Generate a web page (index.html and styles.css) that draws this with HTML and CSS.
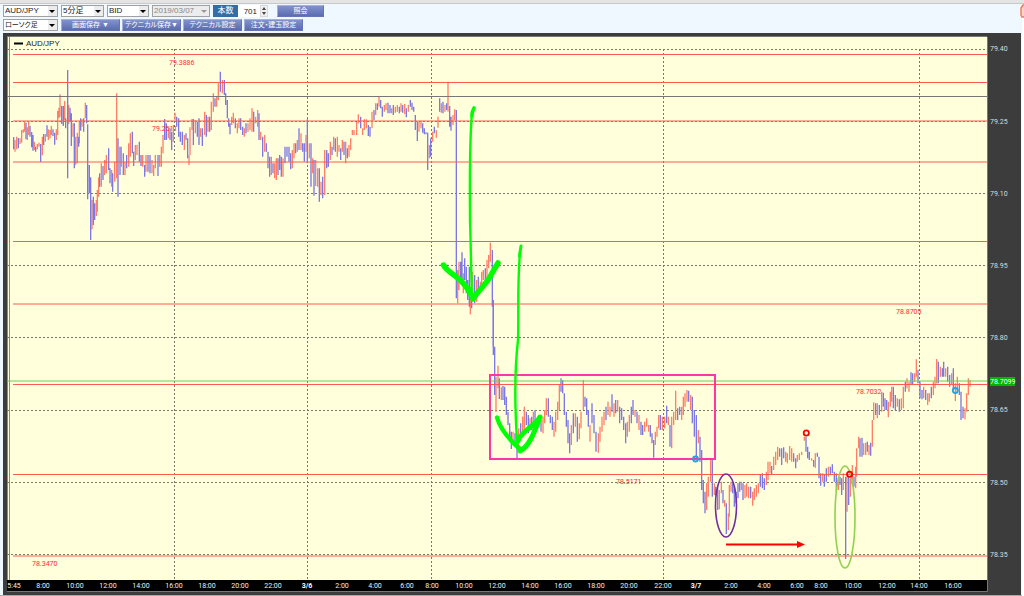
FILE: index.html
```html
<!DOCTYPE html>
<html lang="ja">
<head>
  <meta charset="utf-8">
  <title>AUD/JPY チャート</title>
  <link rel="stylesheet" href="styles.css">
</head>
<body>
<div class="strip"></div>
<main class="workspace">
  <form class="toolbar" id="chartForm">
    <div class="row">
      <span class="drop pair"><select aria-label="通貨ペア"><option>AUD/JPY</option></select></span>
      <span class="drop span"><select aria-label="足種"><option>5分足</option></select></span>
      <span class="drop side"><select aria-label="BID/ASK"><option>BID</option></select></span>
      <span class="drop date off"><select aria-label="日付" disabled><option>2019/03/07</option></select></span>
      <span class="count">
        <label for="bars">本数</label>
        <input type="text" id="bars" value="701">
        <svg class="spin" viewBox="0 0 8 12" aria-hidden="true">
          <rect x="0.5" y="0.5" width="7" height="11" fill="#f0f0f0" stroke="#d8d8d8"/>
          <path d="M4 2 L6 5 H2 Z M4 10 L6 7 H2 Z" fill="#444"/>
        </svg>
      </span>
      <button type="submit" class="show">照会</button>
    </div>
    <div class="row second">
      <span class="drop pair"><select aria-label="チャート種類"><option>ローソク足</option></select></span>
      <button type="button">画面保存 ▼</button>
      <button type="button">テクニカル保存▼</button>
      <button type="button">テクニカル設定</button>
      <button type="button">注文・建玉設定</button>
    </div>
  </form>

  <svg class="chart" viewBox="3 33 1018 562">
    <rect class="frame" x="3" y="33" width="1018" height="562"/>
    <rect class="plot" x="7" y="37" width="980" height="543"/>
    <rect class="time-axis" x="7" y="580" width="980" height="11"/>
    <path class="frame-line" d="M7 36.5 H987 M7 591.5 H987.5 V37"/>
    <path class="edge" d="M7.5 37 V580 M9.5 37 V580"/>
    <path class="grid" d="M7 49.5 H987 M7 121.5 H987 M7 193.5 H987 M7 265.5 H987 M7 337.5 H987 M7 410.5 H987 M7 482.5 H987 M7 554.5 H987"/>
    <path class="grid" d="M174.5 49 V580 M307.5 49 V580 M431.5 49 V580 M663.5 49 V580 M919.5 49 V580"/>
    <g id="candles"></g>
    <path class="level" d="M13 54.5 H987 M13 82.5 H987 M13 121 H987 M13 162 H987 M13 241.5 H987 M13 304 H987 M13 384.5 H987 M13 474.5 H987 M13 556 H987"/>
    <path class="cursor" d="M7 96.5 H987"/>
    <path class="bid" d="M7 381 H987"/>

    <path d="M14 43.5 H23" stroke="#000" stroke-width="2"/>
    <text class="legend" x="26" y="46">AUD/JPY</text>

    <g class="level-text">
      <text x="169" y="65">79.3886</text>
      <text x="152" y="131">79.2511</text>
      <text x="896" y="314">78.8705</text>
      <text x="856" y="394">78.7032</text>
      <text x="616" y="484">78.5171</text>
      <text x="32" y="566">78.3470</text>
    </g>

    <g class="price" id="prices"></g>
    <rect x="990" y="377" width="25" height="9" fill="#00b400"/>
    <text class="last" x="990" y="384">78.7099</text>
    <svg x="7" y="580" width="980" height="11" viewBox="7 580 980 11"><g class="time" id="times"></g></svg>

    <!-- notes drawn over the chart -->
    <rect class="box" x="490" y="375" width="225" height="84"/>
    <ellipse cx="726" cy="505.5" rx="10.5" ry="31.5" class="ring purple"/>
    <ellipse cx="845" cy="517" rx="10" ry="51" class="ring lime"/>
    <path d="M726 544.5 H799" stroke="#f00" stroke-width="2"/>
    <path d="M797 541 L805 544.5 L797 548 Z" fill="#f00"/>
    <g class="pen">
      <path stroke-width="3.6" d="M474 108 Q472 111 472 116"/>
      <path stroke-width="2.4" d="M472 112 C469 150 470 190 470 220 C471 250 471 270 472 298"/>
      <path stroke-width="5.5" d="M443.5 265 C447 272 457 276 462 282 C467 287 470 292 473 299 C478 291 485 285 490 277 C493 271 495 268 498 263"/>
      <path stroke-width="3" d="M521 246 L519.5 256"/>
      <path stroke-width="2.4" d="M520 252 C517 290 519 315 518 340 C514 375 515 410 517 440"/>
      <path stroke-width="4.4" d="M497 417.5 C500 428 506 437 520 449"/>
      <path stroke-width="5" d="M520 451 C530 446 535 430 540 417 C534 427 520 432 518 441"/>
    </g>
    <g class="mark">
      <circle cx="695.5" cy="459" r="2.5" stroke="#1ea5e6"/>
      <circle cx="955.3" cy="390.5" r="2.5" stroke="#1ea5e6"/>
      <circle cx="806.3" cy="433" r="2.6" stroke="#f00"/>
      <circle cx="849.6" cy="474.3" r="2.6" stroke="#f00"/>
    </g>
  </svg>
</main>
<svg class="tab" viewBox="0 0 4 14" aria-hidden="true">
  <path d="M5 1 H3 L1 4 V11 L2 13 H5" fill="#fbd3c4" stroke="#ee7a5c" stroke-width="1.4"/>
</svg>
<script src="chart.js"></script>
</body>
</html>
```
FILE: styles.css
```css
body {
  margin: 0;
  background-color: #fff;
  font-family: "Liberation Sans", "Noto Sans CJK JP", sans-serif;
  font-size: 8px;
}

.strip {
  height: 3px;
  background-color: #e4e4e4;
  border-bottom: 1px solid #c8c8c8;
}

.workspace {
  margin-right: 2px;
  padding: 1px 1px 0 3px;
  background-color: #eff7ff;
  border-bottom: 1px solid #aaa;
}

.toolbar {
  display: flex;
  flex-direction: column;
  gap: 2px;
  padding-bottom: 2px;
}

.row {
  display: flex;
  gap: 3px;
  height: 12px;
}

.second {
  gap: 2px;
}

/* ドロップダウン */
.drop {
  position: relative;
  display: block;
  box-sizing: border-box;
  border: 1px solid #a0a0a0;
  background-color: #fff;
}

.drop select {
  display: block;
  width: 100%;
  height: 10px;
  padding: 0 10px 0 1px;
  border: 0;
  appearance: none;
  background: none;
  color: #222;
  font: inherit;
  line-height: 10px;
  font-feature-settings: "palt";
}

.drop::before {
  content: "";
  position: absolute;
  top: 0;
  right: 0;
  width: 9px;
  height: 10px;
  background-color: #ececec;
}

.drop::after {
  content: "";
  position: absolute;
  top: 4px;
  right: 2px;
  border: 3px solid transparent;
  border-top-color: #000;
  border-bottom: 0;
}

.pair {
  width: 55px;
}

.span {
  width: 43px;
}

.side {
  width: 42px;
}

.date {
  width: 58px;
}

.off {
  background-color: #ececec;
}

.off select {
  color: #888;
  opacity: 1;
}

.off::after {
  border-top-color: #999;
}

.second .drop {
  margin-right: 1px;
}

.second select {
  font-size: 7px;
}

/* 本数 */
.count {
  display: flex;
  width: 55px;
}

.count label {
  width: 25px;
  background-color: #336da5;
  color: #fff;
  line-height: 12px;
  text-align: center;
}

.count input {
  box-sizing: border-box;
  width: 22px;
  padding: 0 3px;
  border: 0;
  background-color: #fff;
  color: #222;
  font: inherit;
  text-align: right;
}

.spin {
  width: 8px;
  height: 12px;
}

button {
  width: 59px;
  height: 12px;
  padding: 0;
  border: 1px solid #6474b4;
  border-top-color: #a4b0da;
  border-left-color: #a4b0da;
  background-image: linear-gradient(#8292cc, #5a6cb0);
  color: #fff;
  font-family: inherit;
  font-size: 7px;
  line-height: 10px;
  font-feature-settings: "palt";
  white-space: nowrap;
}

.show {
  width: 47px;
  margin-left: 6px;
}

/* チャート */
.chart {
  display: block;
  width: 100%;
  height: auto;
}

.chart path {
  fill: none;
}

.chart path[fill] {
  fill: #f00;
}

.frame {
  fill: #3c3c3c;
}

.plot {
  fill: #ffffdc;
}

.time-axis {
  fill: #000;
}

.frame-line {
  stroke: #777;
}

.edge {
  stroke: #8a8a80;
}

.grid {
  stroke: #77776a;
  stroke-dasharray: 2 2;
}

.level {
  stroke: #ff5a50;
}

.cursor {
  stroke: #777;
}

.bid {
  stroke: #6ccc5c;
}

.up {
  stroke: #ff8068;
}

.down {
  stroke: #7c78e4;
}

.chart text {
  font-family: Roboto, "Liberation Sans", sans-serif;
  font-size: 7px;
}

.chart .legend {
  font-family: "Liberation Sans", sans-serif;
  font-size: 8px;
  fill: #222;
}

.level-text {
  fill: #ff2c38;
}

.price {
  fill: #dcdcdc;
}

.last {
  fill: #fff;
}

.time {
  fill: #f0f0f0;
  text-anchor: middle;
}

.time .day {
  font-weight: bold;
  fill: #fff;
}

.box {
  fill: none;
  stroke: #ff37a2;
  stroke-width: 2;
}

.ring {
  fill: none;
  stroke-width: 1.6;
}

.purple {
  stroke: #7030a0;
}

.lime {
  stroke: #92d050;
}

.pen {
  stroke: #0f0;
  stroke-linecap: round;
  stroke-linejoin: round;
}

.mark {
  fill: none;
  stroke-width: 1.8;
}

.tab {
  position: absolute;
  top: 4px;
  right: 0;
  width: 4px;
  height: 14px;
  overflow: hidden;
}
```
FILE: chart.js
```js
const SVG = 'http://www.w3.org/2000/svg';

// each block: origin, then "x high low" per bar in 1/3 units, r = up, b = down
const blocks = [
  { x: 0, y: 40, bars: `b41 291 328,r45 300 335,r50 290 328,b55 294 325,r60 295 312,r65 270 308,r70 268 278,r74 243 275,
b78 248 298,r82 262 300,r86 243 285,b90 258 290,b95 276 322,b99 285 332,r103 305 330,b107 320 335,r112 312 328,r117 308 320,
b122 312 366,r127 290 346,b131 282 315,r136 282 305,b141 256 290,r145 268 300,r150 270 295,r154 258 285,b159 268 288,
b164 278 314,r169 268 300,r173 212 285,r177 203 235,r180 163 230,b185 198 252,b190 198 258,r194 183 240,b197 235 265,
b203 90 415,r206 195 252,b210 203 245,b214 220 318,r219 250 290,b223 250 385,r227 290 374,r232 278 370,b236 290 320,
r238 245 310,b242 235 272,r246 238 260,b251 235 275,r256 188 235,b260 195 250,b263 253 478,b268 375 460,b272 412 600,
r276 480 568,b280 470 555,b284 490 540,r289 480 528,r292 450 515,r296 412 470,b299 400 440,r304 370 440,b309 378 420,
r314 360 405,r319 345 400,b326 325 390,b330 385 430,r335 390 440,b338 400 455,r344 365 425,r350 160 415,b354 295 470,
b360 320 405,r364 320 380,b370 340 405,r375 365 405,b380 345 385,r386 310 380,r391 280 350,b397 275 340,b401 335 378,
r406 315 360,r411 315 345,b418 305 365,b423 345 378,r428 345 380,b434 375 410,r438 345 395,b444 345 395,b450 345 400,
r456 360 400,r461 375 408,r466 345 385,b474 345 408,r479 345 380,r484 320 380,r489 285 340,b494 237 300,b499 250 300,
r505 265 295,b510 265 300,b515 275 330,r520 255 305,r525 218 240,b530 230 260,b536 235 290,b541 275 305,b547 275 315,
r553 285 330,b558 280 300,b563 295 355,r567 345 375,r570 262 345,r576 237 270,b580 237 315,r586 240 280,b592 245 290,
b597 235 315,r602 265 290,b607 265 318,r614 215 285,b619 225 290,r624 230 275,b629 230 275,r634 185 270,r640 160 215,
b645 175 200,r650 170 200,r655 130 180,b661 95 155,r667 120 160,b673 120 165,b677 160 195,b682 180 235,b686 235 260,
b690 250 283,r695 230 255,r700 218 250,b706 235 265,r712 250 280,r717 235 265` },
  { x: 240, y: 80, bars: `b2 115 150,b8 140 165,r13 145 170,b18 130 160,r24 130 155,r30 115 150,r36 85 155,b41 95 155,
r47 110 130,r53 90 140,b57 100 180,r62 155 180,b68 170 230,r74 165 215,b79 190 215,b84 215 265,b89 230 290,r94 230 285,
b99 250 280,r104 250 295,r109 235 300,b114 235 285,b119 225 270,b124 230 290,r129 235 290,b135 200 250,b141 200 230,
b147 200 245,b152 220 268,r157 210 265,r162 190 235,b167 190 220,r172 180 215,b177 145 210,r183 160 210,b188 190 215,
b193 190 245,r198 165 215,b202 118 250,r208 190 235,b213 190 320,r218 235 280,b222 240 347,r227 240 318,r233 265 320,
b238 265 365,r243 305 345,b248 290 355,r254 210 345,b260 210 265,b265 220 260,r271 185 240,b276 200 225,r281 170 210,
b286 175 215,r292 170 230,r297 195 215,b302 205 240,r307 180 215,b312 185 225,r317 185 250,b322 205 235,r327 195 230,
r332 175 210,r337 150 165,r342 150 165,r350 125 165,r355 103 130,b362 110 145,r368 145 165,r373 118 150,r379 118 145,
b385 135 168,b390 140 170,r396 95 145,b402 90 120,r407 70 105,b412 70 90,r417 50 80,b422 60 85,b427 80 110,r433 75 95,
r438 70 90,b444 68 100,b450 75 100,r455 85 100,b460 75 105,r466 80 98,r472 75 95,b478 80 100,r483 70 95,b488 75 98,
r494 72 102,b499 85 112,r505 75 95,b511 60 80,b516 68 90,b521 80 95,b526 105 150,b532 125 183,r537 125 155,r543 122 145,
b548 130 158,b553 145 163,b558 157 163,b563 158 270,r568 195 235,b572 175 230,r578 155 185,b583 140 160,r589 150 173,
r594 110 143,b599 55 95,r604 70 98,b609 65 100,r615 75 95,b620 70 90,r624 5 95,b629 78 140,b633 110 152,r639 105 135,
r644 88 120` },
  { x: 420, y: 80, bars: `b109 90 655,r113 570 670,r117 545 630,b122 545 600,b126 517 605,r130 580 640,b134 535 600,
b139 560 640,b143 600 660,b148 560 680,r151 620 703,b155 640 685,r158 575 620,b164 585 670,r170 600 665,b175 590 640,
r181 605 640,r185 575 620,r190 570 600,b196 565 600,r201 540 600,r206 525 565,r211 488 545,b217 510 680,b220 670 800` },
  { x: 470, y: 300, bars: `b70 0 165,b74 140 285,r78 230 335,r84 197 265,b88 235 297,r94 262 300,b99 258 300,b104 260 315,
b109 290 345,b114 335 375,b119 370 420,b124 395 447,r129 395 425,b135 400 440,b141 420 475,r146 385 445,b152 370 400,
r158 350 400,r163 320 390,b169 335 375,b175 345 400,r180 355 385,b185 350 390,r190 335 375,b195 330 390,b201 355 385,
r207 345 380,b213 360 395,r219 350 400,r224 330 370,r229 295 345,b235 295 350,b241 345 370,b247 350 390,r252 365 410,
r257 335 395,r263 305 360,r268 255 330,b273 235 275,b278 240 280,b283 280 345,b289 335 380,b294 360 430,b299 400 460,
r304 375 435,b310 340 400,r316 340 380,b322 350 425,r328 370 418,r333 335 385,r340 240 330,b345 290 320,b350 295 345,
b355 330 380,r360 375 425,b366 310 370,b372 345 400,b378 395 455,r385 400 458,r390 380 425,r396 350 395,r402 335 375,
b408 320 360,r414 305 345,r420 320 350,b426 283 335,r432 310 350,b437 300 340,r443 300 335,b449 320 370,b455 325 360,
b461 350 390,b467 370 430,r472 365 410,r478 345 395,b484 320 370,b489 300 345,r495 330 350,b501 335 370,r507 345 390,
b513 365 405,b518 375 405,r524 365 395,r530 355 380,r536 375 395,b541 375 410,b546 400 430,b551 420 473,r556 395 435,
r561 380 410,r566 345 385,b571 345 390,r577 350 390,r584 350 385,b590 317 370,r595 350 375,b600 375 440,r605 350 445,
r611 335 375,r617 272 360,b623 325 360,b629 320 345,r635 320 360,r640 290 345,r645 280 320,r651 270 305,b656 272 305,
r662 285 330,b667 290 370,b673 330 410,b679 345 475,r685 390 430,b690 410 485,b695 450 570,b700 540 610,b705 575 640,
r710 550 630,r715 530 590,r722 480 545,b727 480 590` },
  { x: 700, y: 340, bars: `r43 430 465,b47 440 470,b53 440 510,r58 450 508,r64 425 460,b69 450 490,r74 480 500,b79 490 582,
r85 520 570,r88 435 530,r93 425 455,b98 430 460,b103 440 500,b108 455 490,b114 430 475,b119 425 455,r124 425 450,
b129 430 480,r135 435 475,r140 430 470,r146 440 475,b152 440 475,r158 455 497,r163 445 480,r169 435 470,r175 430 460,
b181 405 440,b187 400 445,b193 415 450,r199 395 435,r204 365 420,r210 365 400,b215 378 405,r221 350 390,r227 335 375,
r233 320 360,b239 325 350,b245 325 375,b251 322 355,r257 335 365,r262 340 370,r269 318 360,r275 325 365,b281 340 365,
b287 355 385,r292 345 365,r298 340 360,r305 335 345,r313 290 302,b318 290 335,b323 320 355,b328 335 360,r335 355 362,
b341 360 380,r346 340 383,b352 338 350,b357 350 415,b362 400 437,r368 400 425,b373 405 440,b379 385 425,r385 380 410,
b391 380 405,b397 373 400,b403 395 425,b409 400 455,r415 415 450,b420 410 435,b425 415 465,r430 400 450,b437 410 657,
r441 410 515,b446 410 495,r451 415 470,r457 375 435,b462 410 440,r467 380 445,r470 325 410,r476 290 325,b480 295 350,
b486 293 350,r491 310 345,r497 308 345,b502 305 335,r507 315 345,b512 308 347,r517 240 320,r521 187 240,b527 190 225,
r532 190 235,b538 195 225,r545 155 215,b550 158 200,b555 175 210,b560 180 210,r565 185 232,r571 155 200,r575 140 185,
b580 140 205,b586 165 210,r592 175 200,b598 178 215,r604 175 210,r610 140 205,b616 125 155,r621 115 145,r627 125 155,
b633 97 135,b638 100 135,r644 100 125,r649 58 110,b654 90 130,b660 125 175,b666 150 178,r671 140 175,b677 150 180,
r683 160 195,r688 160 185,b694 140 175,r700 125 165,r705 110 145,r710 57 130,b715 65 130,r721 80 110,b727 85 110,
b731 65 110,r737 85 110,b743 80 125,b749 105 140,r755 100 135,b760 85 150,r766 130 183,r772 110 160,b778 130 165,
b783 155 240,b789 200 235,r795 205 238,r800 160 215,r805 115 165,r810 120 140` }
];

const times = [
  [14, '5:45'], [43, '8:00'], [75, '10:00'], [108, '12:00'], [141, '14:00'], [174, '16:00'], [207, '18:00'],
  [240, '20:00'], [273, '22:00'], [307, '3/6'], [342, '2:00'], [375, '4:00'], [407, '6:00'], [432, '8:00'],
  [464, '10:00'], [497, '12:00'], [530, '14:00'], [563, '16:00'], [596, '18:00'], [629, '20:00'], [663, '22:00'],
  [696, '3/7'], [731, '2:00'], [764, '4:00'], [797, '6:00'], [821, '8:00'], [853, '10:00'], [887, '12:00'],
  [919, '14:00'], [953, '16:00']
];

const prices = [
  [51, '79.40'], [124, '79.25'], [196, '79.10'], [268, '78.95'],
  [340, '78.80'], [412, '78.65'], [485, '78.50'], [557, '78.35']
];

function addText(parent, x, y, text, cls) {
  const el = document.createElementNS(SVG, 'text');
  el.setAttribute('x', x);
  el.setAttribute('y', y);
  if (cls) el.setAttribute('class', cls);
  el.textContent = text;
  parent.appendChild(el);
}

const candles = document.getElementById('candles');
blocks.forEach(block => {
  const d = { r: '', b: '' };
  block.bars.split(',').forEach(item => {
    const bar = item.trim();
    const [x, high, low] = bar.slice(1).split(' ').map(Number);
    d[bar[0]] += `M${x} ${high}V${low}`;
  });
  ['r', 'b'].forEach(key => {
    const path = document.createElementNS(SVG, 'path');
    path.setAttribute('class', key === 'r' ? 'up' : 'down');
    path.setAttribute('transform', `translate(${block.x} ${block.y}) scale(${1 / 3})`);
    path.setAttribute('stroke-width', 4);
    path.setAttribute('d', d[key]);
    candles.appendChild(path);
  });
});

const timeAxis = document.getElementById('times');
times.forEach(([x, text]) => addText(timeAxis, x, 588, text, text.includes('/') ? 'day' : ''));

const priceAxis = document.getElementById('prices');
prices.forEach(([y, text]) => addText(priceAxis, 990, y, text));

document.getElementById('chartForm').addEventListener('submit', e => e.preventDefault());
```
